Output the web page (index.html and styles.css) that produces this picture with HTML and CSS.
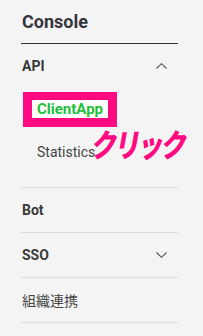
FILE: index.html
```html
<!DOCTYPE html>
<html lang="ja">
<head>
<meta charset="utf-8">
<link rel="stylesheet" href="styles.css">
</head>
<body>
<nav class="side">
  <h1 class="title">Console</h1>
  <div class="group">
    <div class="row">
      <span class="label">API</span>
      <svg class="chev" width="11" height="6" viewBox="0 0 11 6"><path d="M0.5 5.5 L5.5 0.7 L10.5 5.5" fill="none" stroke="#555" stroke-width="1.1"/></svg>
    </div>
    <div class="sub">
      <div class="sub-item active"><span class="hl">ClientApp</span></div>
      <div class="sub-item">Statistics</div>
      <span class="note">クリック</span>
    </div>
  </div>
  <div class="group">
    <div class="row"><span class="label">Bot</span></div>
  </div>
  <div class="group">
    <div class="row">
      <span class="label">SSO</span>
      <svg class="chev" width="11" height="6" viewBox="0 0 11 6"><path d="M0.5 0.5 L5.5 5.3 L10.5 0.5" fill="none" stroke="#555" stroke-width="1.1"/></svg>
    </div>
  </div>
  <div class="group">
    <div class="row"><span class="label jp">組織連携</span></div>
  </div>
</nav>
</body>
</html>
```
FILE: styles.css
```css
html, body {
  margin: 0;
  padding: 0;
  background: #f4f4f4;
}
body {
  font-family: Roboto, "Noto Sans CJK JP", sans-serif;
  color: #3a3a3a;
}
.side {
  width: 157px;
  margin-left: 21px;
}
.title {
  margin: 0;
  font-size: 18px;
  font-weight: 700;
  color: #35353c;
  line-height: 20px;
  padding: 12px 0 11px 1px;
  border-bottom: 1px solid #333338;
}
.group {
  border-bottom: 1px solid #dcdcdc;
  position: relative;
}
.row {
  height: 44px;
  display: flex;
  align-items: center;
  justify-content: space-between;
  padding-left: 1px;
}
.label {
  font-size: 14px;
  font-weight: 700;
  color: #3a3a3a;
}
.label.jp {
  font-weight: 400;
  font-size: 14px;
  color: #444;
}
.chev {
  margin-right: 11px;
}
.sub {
  display: flex;
  flex-direction: column;
  gap: 7px;
  padding-bottom: 18px;
  margin-top: 4px;
}
.sub-item {
  font-size: 14px;
  color: #444;
  height: 35px;
  display: flex;
  align-items: center;
  padding-left: 16px;
}
.sub-item.active {
  padding-left: 2px;
}
.hl {
  display: inline-block;
  border-style: solid;
  border-color: #ff0a80;
  border-width: 8px 9px 9px 9px;
  background: #fff;
  color: #1fbf3a;
  font-weight: 700;
  font-size: 15px;
  line-height: 18px;
  padding: 0 5px 0 5px;
}
.note {
  position: absolute;
  left: 75px;
  top: 81px;
  white-space: nowrap;
  font-family: "Noto Sans CJK JP", sans-serif;
  font-weight: 900;
  font-size: 32px;
  color: #ff0a80;
  transform: skewX(-10deg) scaleX(0.8);
  transform-origin: left top;
  letter-spacing: -3px;
  line-height: 36px;
}
```
